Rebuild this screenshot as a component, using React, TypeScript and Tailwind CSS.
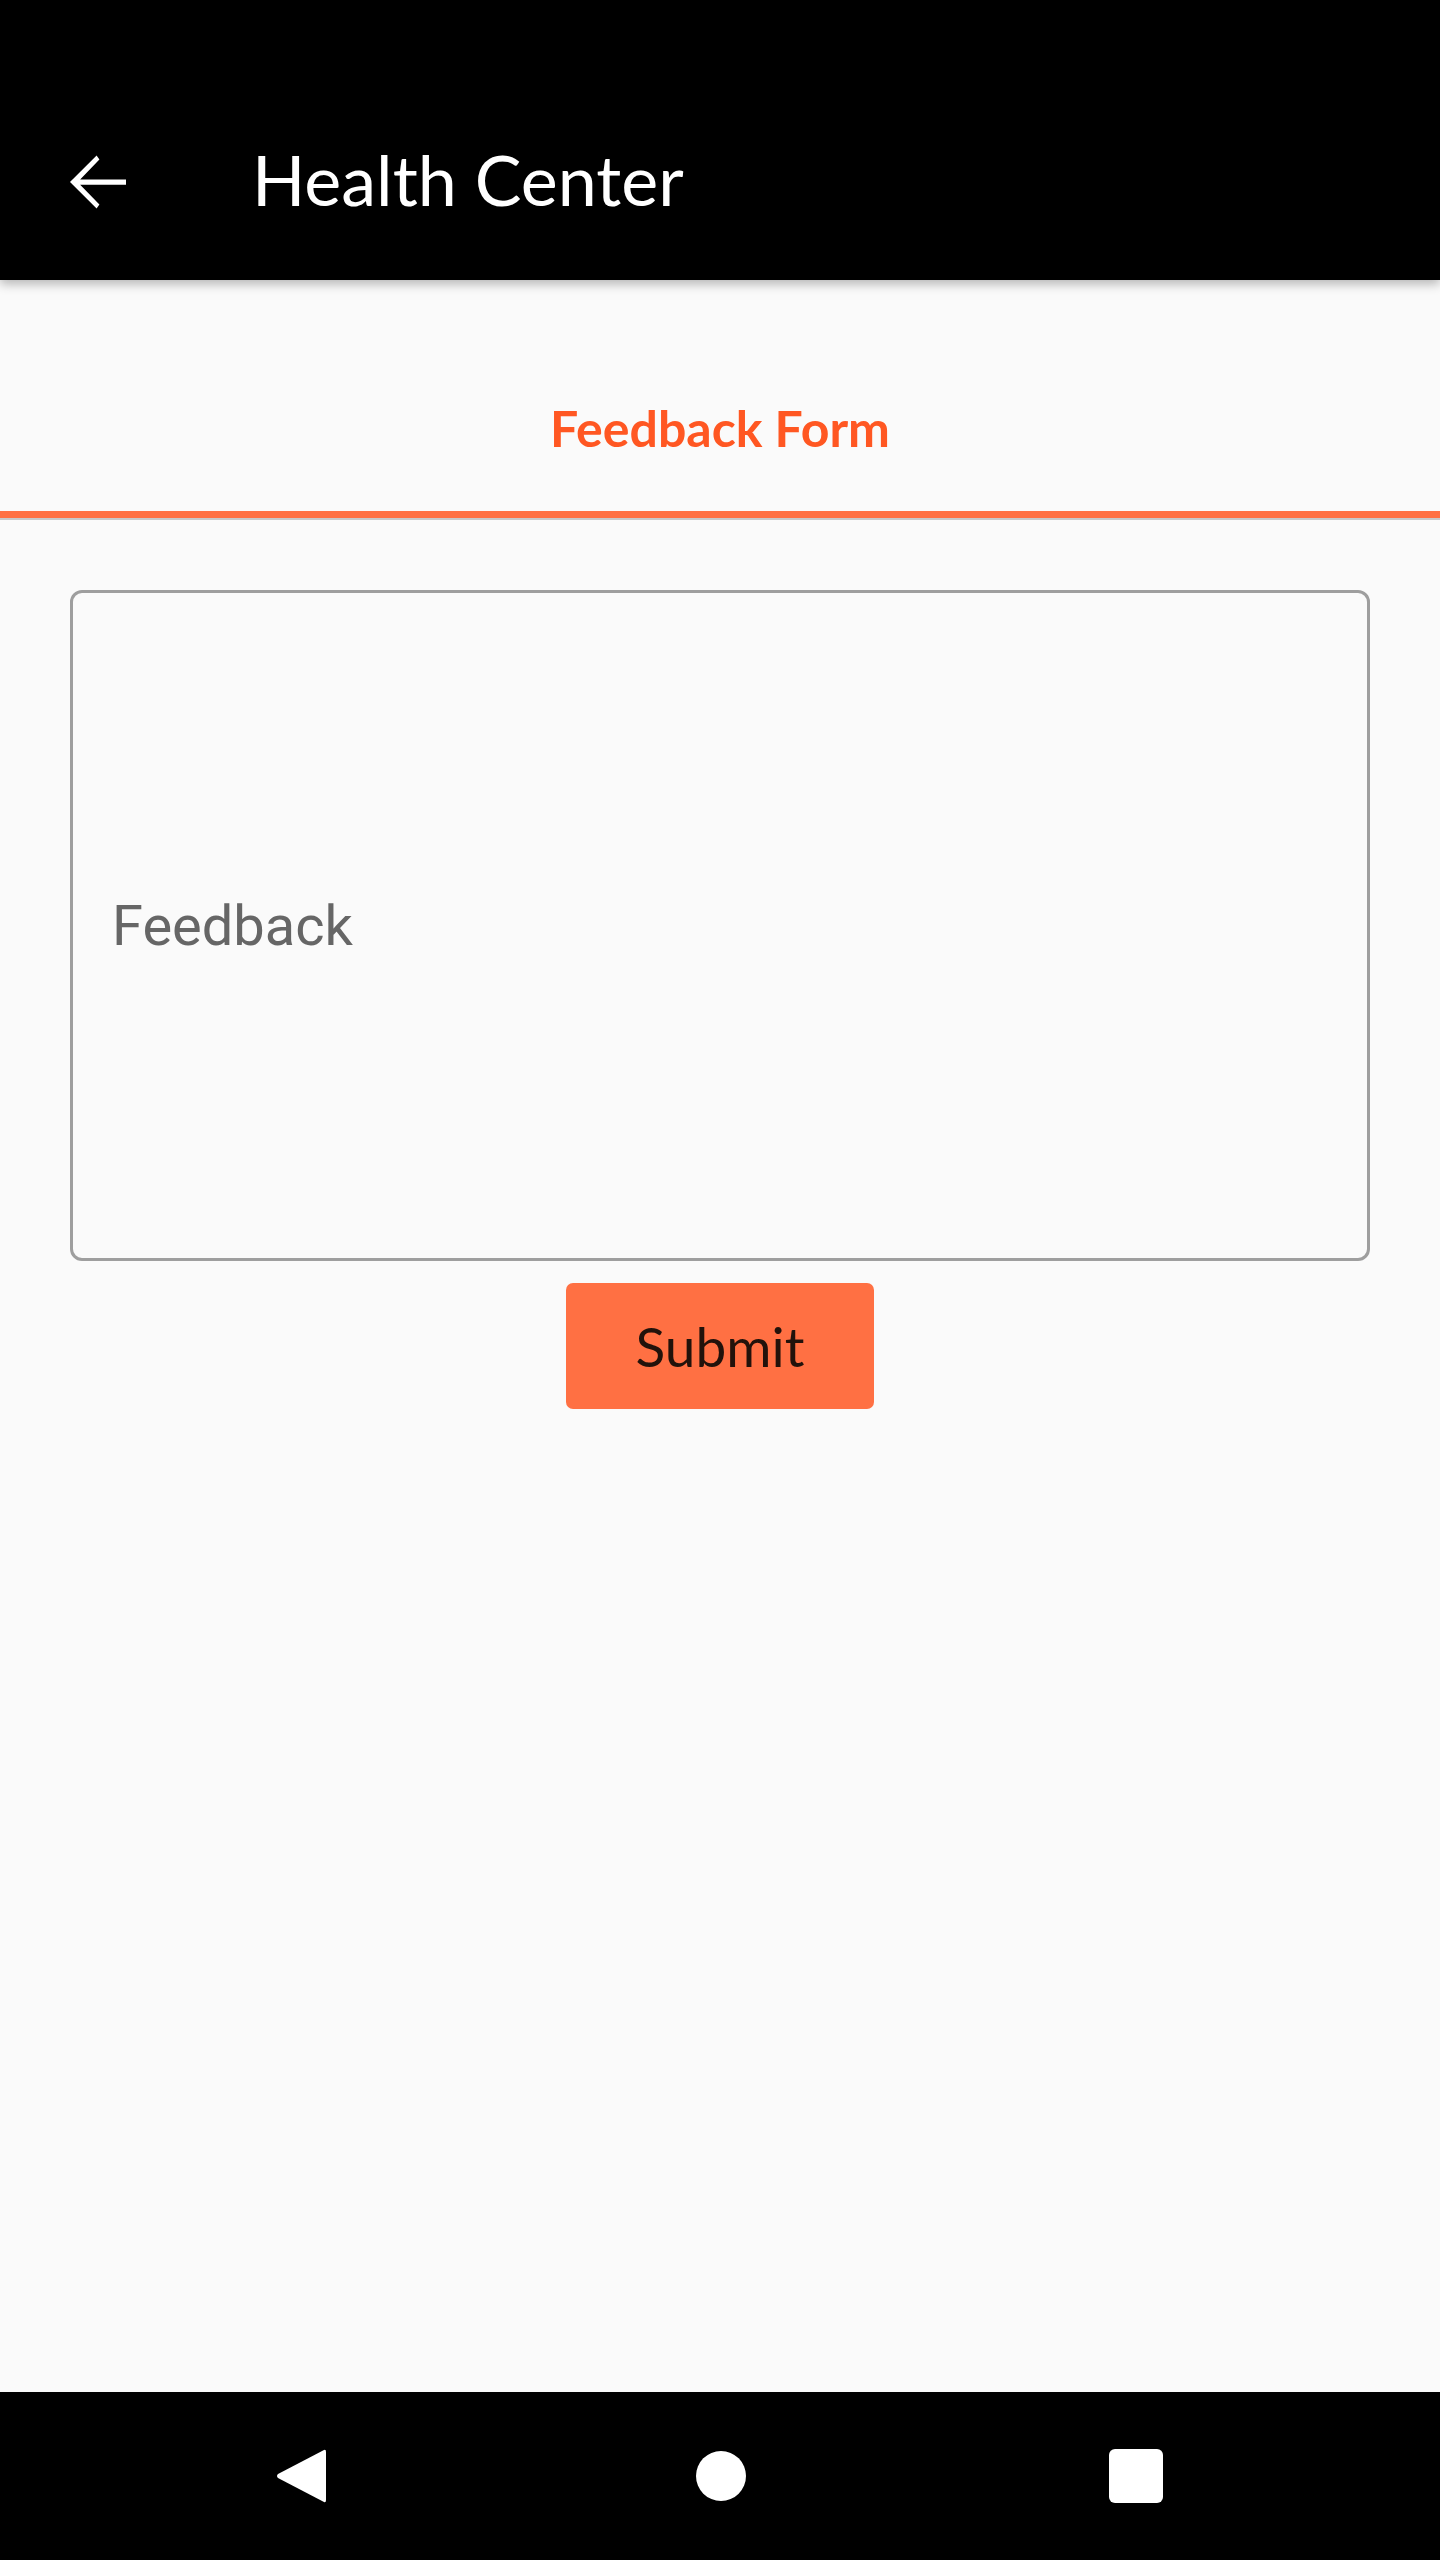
import React from "react";

export default function App() {
  return (
    <div className="flex h-[2560px] w-[1440px] flex-col bg-[#fafafa]">
      <header className="relative z-10 h-[280px] bg-black pt-[84px] shadow-[0_4px_10px_rgba(0,0,0,0.28)]">
        <div className="flex h-[196px] items-center pl-[56px]">
          <svg width="84" height="84" viewBox="0 0 24 24" fill="white">
            <path d="M20 11.25H6.9l5.5-5.7L11.6 4.4 4 12l7.6 7.6.8-1.15-5.5-5.7H20v-1.5z" />
          </svg>
          <h1
            className="mb-[6px] ml-[112px] text-[70px] leading-none text-white"
            style={{ fontFamily: "Lato, 'Open Sans', sans-serif" }}
          >
            Health Center
          </h1>
        </div>
      </header>
      <main className="flex flex-1 flex-col">
        <div className="flex h-[238px] flex-col">
          <div className="flex flex-1 justify-center pt-[118px]">
            <span
              className="h-[60px] text-[50px] font-bold leading-[60px] text-[#ff5722]"
              style={{ fontFamily: "Lato, 'Open Sans', sans-serif" }}
            >
              Feedback Form
            </span>
          </div>
          <div className="h-[7px] bg-[#ff7043]" />
        </div>
        <div className="h-[2px] bg-[#c8c8c8]" />
        <div className="mx-[70px] mt-[70px] flex h-[671px] items-center rounded-[12px] border-[3px] border-[#9e9e9e] pl-[39px]">
          <span
            className="text-[56px] leading-none text-[#666666]"
            style={{ fontFamily: "Roboto, sans-serif" }}
          >
            Feedback
          </span>
        </div>
        <div className="mt-[22px] flex justify-center">
          <button
            className="flex h-[126px] w-[308px] items-center justify-center rounded-[7px] bg-[#ff7043] text-[55px] text-[#22120b]"
            style={{ fontFamily: "Lato, 'Open Sans', sans-serif" }}
          >
            Submit
          </button>
        </div>
      </main>
      <nav className="relative flex h-[168px] items-center bg-black">
        <div className="flex w-full items-center">
          <div className="ml-[275px]">
            <svg width="52" height="56" viewBox="0 0 52 56">
              <path d="M49 2 Q51 1 51 4 L51 52 Q51 55 49 54 L3 30 Q1 28 3 26 Z" fill="white" />
            </svg>
          </div>
          <div className="ml-[369px] h-[50px] w-[50px] rounded-full bg-white" />
          <div className="ml-[363px] h-[54px] w-[54px] rounded-[6px] bg-white" />
        </div>
      </nav>
    </div>
  );
}
